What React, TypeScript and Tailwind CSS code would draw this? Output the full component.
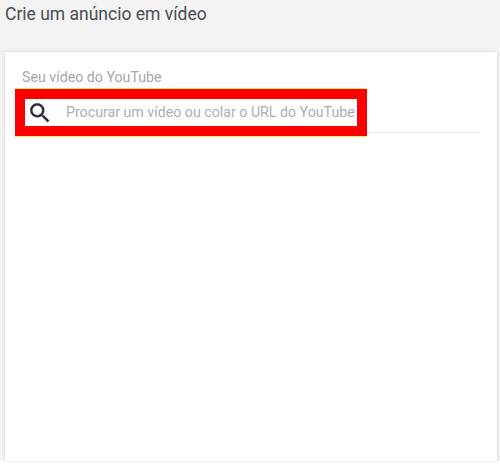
export default function App() {
  return (
    <div className="h-[475px] w-[500px] overflow-hidden bg-white font-['Roboto',sans-serif]">
      <div className="flex h-[461px] flex-col bg-[#f3f3f3] pl-[5px] pr-[3px]">
        <h1 className="mt-[2px] h-[50px] text-[17.5px] leading-[25px] font-normal text-[#4a4d51]">Crie um anúncio em vídeo</h1>
        <div className="flex-1 bg-white pl-[22px] pr-[17px] pt-[18px] shadow-[0_0_3px_rgba(0,0,0,0.16)]">
          <p className="-ml-[5px] h-[19px] text-[14.2px] leading-[15px] text-[#a6a6a6]">Seu vídeo do YouTube</p>
          <div className="relative h-[44px] border-b border-[#e6e6e6]">
            <div className="absolute -left-[12px] top-0 flex h-[47px] w-[352px] items-center border-[10px] border-[#ff0000] bg-white shadow-[0_-1px_0_#ffee55,0_1px_0_#ffee55]">
              <svg viewBox="0 0 24 24" className="ml-[2px] h-[26px] w-[26px] shrink-0 fill-[#2a2a32] stroke-[#2a2a32] stroke-[0.25]">
                <path d="M15.5 14h-.79l-.28-.27A6.47 6.47 0 0 0 16 9.5 6.5 6.5 0 1 0 9.5 16c1.61 0 3.09-.59 4.23-1.57l.27.28v.79l5 4.99L20.49 19l-4.99-5zm-6 0C7.01 14 5 11.99 5 9.5S7.01 5 9.5 5 14 7.01 14 9.5 11.99 14 9.5 14z" />
              </svg>
              <span className="ml-[13px] whitespace-nowrap text-[14.2px] text-[#adadb3]">Procurar um vídeo ou colar o URL do YouTube</span>
            </div>
          </div>
        </div>
      </div>
    </div>
  );
}
